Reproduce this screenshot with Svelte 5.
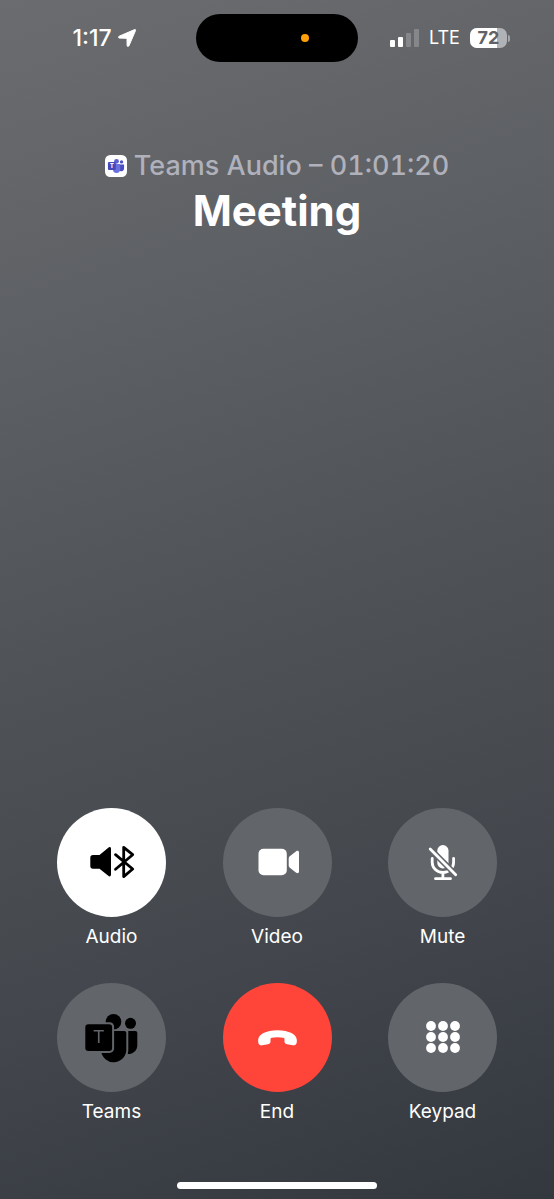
<script lang="ts">
	interface Control {
		id: string;
		label: string;
		variant?: 'active' | 'dark' | 'end';
	}

	const controls: Control[] = [
		{ id: 'audio', label: 'Audio', variant: 'active' },
		{ id: 'video', label: 'Video' },
		{ id: 'mute', label: 'Mute' },
		{ id: 'teams', label: 'Teams', variant: 'dark' },
		{ id: 'end', label: 'End', variant: 'end' },
		{ id: 'keypad', label: 'Keypad' }
	];

	const signal = 2;
	const bars = [7, 10, 14, 18];
	const battery = 72;
	const dotColumns = [43, 55, 67];
	const dotRows = [43, 54, 65];
</script>

<div class="call">
	<div class="status">
		<div class="status__side">
			<span class="status__time">1:17</span>
			<svg class="status__arrow" viewBox="0 0 18 18" aria-hidden="true">
				<path d="M16.600.6c.8-.3 1.200.2.9 1L11 16.700c-.5 1.100-1.900.9-1.900-.3L9 9.300l-7.400-.2C.3 9.100.1 7.700 1.200 7.200z" />
			</svg>
		</div>
		<div class="island"><span class="island__dot"></span></div>
		<div class="status__side status__side--right">
			<div class="signal">
				{#each bars as height, i}
					<span class="signal__bar" class:signal__bar--off={i >= signal} style="height:{height}px"></span>
				{/each}
			</div>
			<span class="status__network">LTE</span>
			<div class="battery">
				<div class="battery__body">
					<span class="battery__level" style="width:{battery}%"></span>
					<span class="battery__text">{battery}</span>
				</div>
				<span class="battery__nub"></span>
			</div>
		</div>
	</div>

	<header class="header">
		<p class="header__source">
			<svg class="header__app" viewBox="0 0 21 21" aria-hidden="true">
				<rect width="21" height="21" rx="5" fill="#fff" />
				<circle cx="11" cy="6" r="2.3" fill="#5b60d0" />
				<circle cx="15.8" cy="6.6" r="1.6" fill="#4b50c0" />
				<path d="M13 9h5.200v4a2.500 2.500 0 0 1-4 2z" fill="#4a4fc0" />
				<path d="M7.500 8.600H14.500v5a3.500 3.500 0 0 1-7 0z" fill="#6a70e0" />
				<rect x="2.800" y="6.800" width="7.500" height="7.500" rx="1" fill="#4448b8" />
				<text x="6.600" y="12.800" text-anchor="middle" font-size="6" font-weight="700" fill="#fff">T</text>
			</svg>
			<span>Teams Audio – 01:01:20</span>
		</p>
		<h1 class="header__title">Meeting</h1>
	</header>

	<div class="controls">
		{#each controls as control (control.id)}
			<div class="control">
				<button class="control__button {control.variant ?? ''}" id={control.id} aria-labelledby="{control.id}-label">
					<svg viewBox="0 0 109 109" aria-hidden="true">
						{#if control.id === 'audio'}
							<path d="M36 47h6.500l8.800-7.300c1.300-1.100 2.700-.6 2.700 1.200v25.700c0 1.800-1.400 2.300-2.700 1.200L42.500 60.700H36c-1.700 0-2.700-1-2.700-2.700v-8.300c0-1.700 1-2.700 2.700-2.700z" />
							<path class="line" d="M58.500 46.700 75.700 61l-9 7.600V39.300l9 7.400-17.200 14.600" />
						{:else if control.id === 'video'}
							<rect x="35.500" y="40.700" width="28.300" height="26.600" rx="5" />
							<path d="M65.700 50.500c0-1 .4-1.700 1.100-2.300l6.400-5c1.300-1 2.800-.4 2.800 1.200v19.200c0 1.600-1.500 2.200-2.800 1.200l-6.400-5c-.7-.6-1.100-1.300-1.100-2.300z" />
						{:else if control.id === 'mute'}
							<mask id="mute-gap">
								<rect width="109" height="109" fill="#fff" />
								<path d="M41 39.800 69 68" stroke="#000" stroke-width="6" />
							</mask>
							<g mask="url(#mute-gap)">
								<rect x="49.300" y="37" width="11.200" height="23.500" rx="5.600" />
								<path class="line" d="M44.200 50.500v3.700a10.700 10.200 0 0 0 21.400 0v-3.700M54.900 64.500v6" />
							</g>
							<path class="line" d="M47.500 70.700h15M42.200 41 67.700 66.700" />
						{:else if control.id === 'teams'}
							<mask id="teams-gap">
								<rect width="109" height="109" fill="#fff" />
								<rect x="26.300" y="39.300" width="30.800" height="30.600" rx="4.500" fill="#000" />
							</mask>
							<mask id="teams-letter">
								<rect width="109" height="109" fill="#fff" />
								<text x="41.700" y="60" text-anchor="middle" font-size="18" font-weight="500" fill="#000">T</text>
							</mask>
							<g mask="url(#teams-gap)">
								<circle cx="56.500" cy="38.700" r="7.800" />
								<path d="M44 48h23.300c1.200 0 2 .8 2 2v15.500a12.650 12.650 0 0 1-25.300 2z" />
							</g>
							<circle cx="73.500" cy="40.300" r="5.500" />
							<path d="M71.300 48h7c1.200 0 2 .8 2 2v12.200c0 5-3.600 8.800-9.600 8.800.5-1.700.6-3 .6-5z" />
							<rect x="28.300" y="41.300" width="26.800" height="26.600" rx="3" mask="url(#teams-letter)" />
						{:else if control.id === 'end'}
							<path d="M54.500 47.200c11.600 0 19.400 4.200 19.400 10.300 0 3.800-1.500 5.300-4.100 4.800l-5.800-1.100c-1.800-.3-2.500-1.200-2.500-2.700v-2.600c-.1-.7-.4-1-1.100-1.200-3.400-.7-8.400-.7-11.800 0-.7.2-1 .5-1.100 1.200v2.600c0 1.500-.7 2.400-2.500 2.700l-5.800 1.100c-2.600.5-4.100-1-4.100-4.800 0-6.100 7.800-10.300 19.400-10.300z" />
						{:else}
							{#each dotColumns as cx}
								{#each dotRows as cy}
									<circle {cx} {cy} r="4.900" />
								{/each}
							{/each}
						{/if}
					</svg>
				</button>
				<label class="control__label" id="{control.id}-label" for={control.id}>{control.label}</label>
			</div>
		{/each}
	</div>

	<div class="home"></div>
</div>

<style>
	:global(body) {
		margin: 0;
		background: #4b4f55;
	}

	.call {
		display: flex;
		flex-direction: column;
		box-sizing: border-box;
		min-height: 100vh;
		padding-bottom: 10px;
		background: linear-gradient(162deg, #6b6c6f 0%, #5d6064 25%, #4f5357 50%, #43474d 75%, #33373e 100%);
		font-family: Inter, 'Liberation Sans', sans-serif;
		color: #fff;
	}

	/* Status bar */
	.status {
		display: grid;
		grid-template-columns: 1fr auto 1fr;
		align-items: center;
		padding: 14px 12px 0;
	}

	.status__side {
		display: flex;
		align-items: center;
		justify-content: center;
		gap: 6px;
	}

	.status__side--right {
		gap: 10px;
	}

	.status__time {
		font-size: 23px;
		font-weight: 500;
		line-height: 24px;
	}

	.status__arrow {
		width: 18px;
		height: 18px;
		fill: #fff;
		stroke: #fff;
		stroke-width: 1;
		overflow: visible;
	}

	.status__network {
		font-size: 18px;
		line-height: 24px;
	}

	.island {
		display: flex;
		align-items: center;
		justify-content: flex-end;
		box-sizing: border-box;
		width: 162px;
		height: 48px;
		padding-right: 49px;
		border-radius: 24px;
		background: #000;
	}

	.island__dot {
		width: 8px;
		height: 8px;
		border-radius: 50%;
		background: #ff9f0a;
	}

	.signal {
		display: flex;
		align-items: flex-end;
		gap: 3px;
	}

	.signal__bar {
		width: 5px;
		border-radius: 1px;
		background: #fff;
	}

	.signal__bar--off {
		background: rgba(255, 255, 255, 0.22);
	}

	.battery {
		display: flex;
		align-items: center;
		gap: 1px;
	}

	.battery__body {
		display: grid;
		width: 37px;
		height: 20px;
		border-radius: 7px;
		overflow: hidden;
		background: #b0b2b5;
	}

	.battery__level,
	.battery__text {
		grid-area: 1 / 1;
	}

	.battery__level {
		background: #fff;
	}

	.battery__text {
		font-size: 18px;
		font-weight: 700;
		line-height: 20px;
		text-align: center;
		color: #5f6266;
	}

	.battery__nub {
		width: 2px;
		height: 7px;
		border-radius: 0 2px 2px 0;
		background: #a4a6a9;
	}

	/* Call details */
	.header {
		flex: 1;
		padding-top: 86px;
		text-align: center;
	}

	.header__source {
		display: flex;
		align-items: center;
		justify-content: center;
		gap: 7px;
		margin: 0;
		font-size: 27px;
		font-weight: 500;
		font-variant-numeric: tabular-nums;
		line-height: 36px;
		color: #b0b1bb;
	}

	.header__app {
		width: 22px;
		height: 22px;
	}

	.header__title {
		margin: 0;
		font-size: 42px;
		font-weight: 700;
		line-height: 54px;
	}

	/* Controls */
	.controls {
		display: grid;
		grid-template-columns: repeat(3, auto);
		justify-content: space-between;
		row-gap: 33px;
		padding: 0 57px;
	}

	.control {
		display: flex;
		flex-direction: column;
		align-items: center;
		gap: 7px;
		width: 109px;
	}

	.control__button {
		width: 109px;
		height: 109px;
		padding: 0;
		border: 0;
		border-radius: 50%;
		background: #626569;
		color: #fff;
		cursor: pointer;
	}

	.control__button.active {
		background: #fff;
		color: #000;
	}

	.control__button.dark {
		color: #000;
	}

	.control__button.end {
		background: #ff453a;
	}

	.control__button svg {
		display: block;
		width: 100%;
		height: 100%;
		fill: currentColor;
	}

	.control__button .line {
		fill: none;
		stroke: currentColor;
		stroke-width: 2.8;
		stroke-linecap: round;
		stroke-linejoin: round;
	}

	.control__label {
		font-size: 19px;
		line-height: 26px;
	}

	.home {
		align-self: center;
		width: 36%;
		height: 7px;
		margin-top: 57px;
		border-radius: 4px;
		background: #fff;
	}
</style>
